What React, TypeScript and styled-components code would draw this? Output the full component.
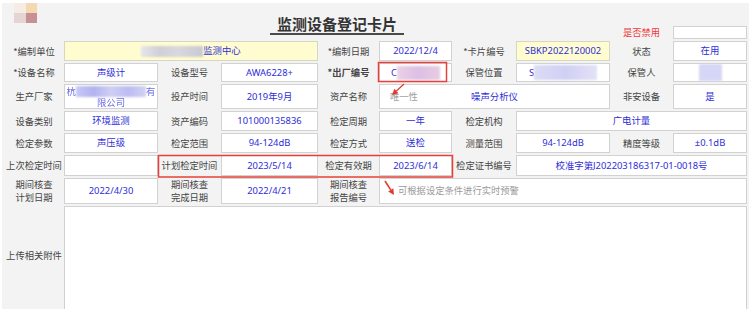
import React from "react";
import styled, { createGlobalStyle } from "styled-components";

const Global = createGlobalStyle`
  html, body { margin: 0; padding: 0; background: #fff; }
  body { font-family: "Noto Sans CJK SC", "Noto Sans", sans-serif; }
  #root { width: 752px; height: 309px; overflow: hidden; }
`;

const Page = styled.div`
  position: relative;
  margin: 3px 3px 0 2px;
  height: 306px;
  background: #f3f3f3;
  overflow: hidden;
`;

const Grid = styled.div`
  display: grid;
  grid-template-columns: 60px 94px 63px 97px 61px 73px 64px 94px 63px 74px;
  grid-template-rows: 36px 20px 19px 25px 20px 20px 21px 26px 99px;
  row-gap: 2px;
  padding-left: 2px;
`;

const Cell = styled.div<{ $c: string; $r: number }>`
  grid-column: ${(p) => p.$c};
  grid-row: ${(p) => p.$r};
  box-sizing: border-box;
  min-width: 0;
`;

const Label = styled(Cell)<{ $bold?: boolean; $red?: boolean }>`
  display: flex;
  align-items: center;
  justify-content: center;
  text-align: center;
  font-size: 9.3px;
  line-height: 13px;
  white-space: pre-line;
  color: ${(p) => (p.$red ? "#f03a3a" : "#454545")};
  font-weight: ${(p) => (p.$bold ? 700 : 400)};
`;

const Value = styled(Cell)<{ $yellow?: boolean; $left?: boolean }>`
  position: relative;
  display: flex;
  align-items: center;
  justify-content: ${(p) => (p.$left ? "flex-start" : "center")};
  padding-left: ${(p) => (p.$left ? "18px" : "0")};
  background: ${(p) => (p.$yellow ? "#fffdd0" : "#fff")};
  border: 1px solid ${(p) => (p.$yellow ? "#d6d6c4" : "#d2d2d2")};
  color: #2e2ed8;
  font-family: "Noto Sans", "Noto Sans CJK SC", sans-serif;
  font-size: 9.4px;
  line-height: 12px;
  white-space: nowrap;
`;

const UploadBox = styled(Value)`
  align-self: start;
  height: 112px;
`;

const SmallBox = styled(Value)`
  align-self: end;
  height: 13px;
`;

const RedLabel = styled(Label)`
  align-self: end;
  height: 14px;
`;

const Stack = styled(Value)`
  flex-direction: column;
  justify-content: center;
  line-height: 11px;
`;

const Line = styled.div`
  display: flex;
  align-items: center;
`;

const Smudge = styled.span<{ $w: number; $h: number; $bg: string }>`
  display: inline-block;
  width: ${(p) => p.$w}px;
  height: ${(p) => p.$h}px;
  background: ${(p) => p.$bg};
  filter: blur(1.2px);
`;

const Blurred = styled.span`
  color: #6b6be6;
  filter: blur(0.6px);
`;

const Placeholder = styled.span`
  position: absolute;
  left: 10px;
  top: 50%;
  transform: translateY(-50%);
  color: #a0a0a0;
  font-size: 9.3px;
`;

const Hint = styled.span`
  color: #9a9a9a;
  font-size: 9.3px;
`;

const LogoCell = styled(Cell)`
  align-self: start;
  justify-self: start;
  margin-left: 10px;
  display: grid;
  grid-template-columns: 12px 11px;
  grid-template-rows: 10px 10px;
  filter: blur(0.6px);
`;

const Tile = styled.span<{ $bg: string }>`
  background: ${(p) => p.$bg};
`;

const TitleCell = styled(Cell)`
  align-self: start;
  padding-left: 206px;
  padding-top: 8px;
`;

const Title = styled.h1`
  display: inline-block;
  margin: 0;
  padding: 0 7px;
  font-size: 15px;
  line-height: 18px;
  font-weight: 700;
  color: #333;
  border-bottom: 2px solid #4a4a4a;
  letter-spacing: 0;
`;

const Overlay = styled.svg`
  position: absolute;
  left: 0;
  top: 0;
  pointer-events: none;
`;

export default function App() {
  return (
    <>
      <Global />
      <Page>
        <Grid>
          <LogoCell $c="1" $r={1}>
            <Tile $bg="#f6ece6" />
            <Tile $bg="#f3d8b0" />
            <Tile $bg="#e6d3d3" />
            <Tile $bg="#c99094" />
          </LogoCell>
          <TitleCell $c="2 / 9" $r={1}>
            <Title>监测设备登记卡片</Title>
          </TitleCell>
          <RedLabel $c="9" $r={1} $red>是否禁用</RedLabel>
          <SmallBox $c="10" $r={1} />

          <Label $c="1" $r={2}>*编制单位</Label>
          <Value $c="2 / 5" $r={2} $yellow>
            <Smudge $w={62} $h={11} $bg="linear-gradient(90deg,#e6e6ea,#cfcfd8 30%,#d8d8de 60%,#c9c9d4)" />
            监测中心
          </Value>
          <Label $c="5" $r={2}>*编制日期</Label>
          <Value $c="6" $r={2}>2022/12/4</Value>
          <Label $c="7" $r={2}>*卡片编号</Label>
          <Value $c="8" $r={2} $yellow>SBKP2022120002</Value>
          <Label $c="9" $r={2}>状态</Label>
          <Value $c="10" $r={2}>在用</Value>

          <Label $c="1" $r={3}>*设备名称</Label>
          <Value $c="2" $r={3}>声级计</Value>
          <Label $c="3" $r={3}>设备型号</Label>
          <Value $c="4" $r={3}>AWA6228+</Value>
          <Label $c="5" $r={3} $bold>*出厂编号</Label>
          <Value $c="6" $r={3}>
            C
            <Smudge $w={43} $h={14} $bg="linear-gradient(90deg,#ead0e6,#dcc0e4 50%,#e8cce0)" />
          </Value>
          <Label $c="7" $r={3}>保管位置</Label>
          <Value $c="8" $r={3}>
            S
            <Smudge $w={63} $h={15} $bg="linear-gradient(90deg,#dcdcf6,#d0d0f4 50%,#e2e2f6)" />
          </Value>
          <Label $c="9" $r={3}>保管人</Label>
          <Value $c="10" $r={3}>
            <Smudge $w={23} $h={17} $bg="#d6d6f6" />
          </Value>

          <Label $c="1" $r={4}>生产厂家</Label>
          <Stack $c="2" $r={4}>
            <Line>
              <Blurred>杭</Blurred>
              <Smudge $w={70} $h={11} $bg="linear-gradient(90deg,#c8c8f6,#b2b2f0 25%,#cfcff4 50%,#bcbcf2 75%,#d2d2f0)" />
              <Blurred>有</Blurred>
            </Line>
            <Line>
              <Blurred>限公司</Blurred>
            </Line>
          </Stack>
          <Label $c="3" $r={4}>投产时间</Label>
          <Value $c="4" $r={4}>2019年9月</Value>
          <Label $c="5" $r={4}>资产名称</Label>
          <Value $c="6 / 9" $r={4}>
            <Placeholder>唯一性</Placeholder>
            噪声分析仪
          </Value>
          <Label $c="9" $r={4}>非安设备</Label>
          <Value $c="10" $r={4}>是</Value>

          <Label $c="1" $r={5}>设备类别</Label>
          <Value $c="2" $r={5}>环境监测</Value>
          <Label $c="3" $r={5}>资产编码</Label>
          <Value $c="4" $r={5}>101000135836</Value>
          <Label $c="5" $r={5}>检定周期</Label>
          <Value $c="6" $r={5}>一年</Value>
          <Label $c="7" $r={5}>检定机构</Label>
          <Value $c="8 / 11" $r={5}>广电计量</Value>

          <Label $c="1" $r={6}>检定参数</Label>
          <Value $c="2" $r={6}>声压级</Value>
          <Label $c="3" $r={6}>检定范围</Label>
          <Value $c="4" $r={6}>94-124dB</Value>
          <Label $c="5" $r={6}>检定方式</Label>
          <Value $c="6" $r={6}>送检</Value>
          <Label $c="7" $r={6}>测量范围</Label>
          <Value $c="8" $r={6}>94-124dB</Value>
          <Label $c="9" $r={6}>精度等级</Label>
          <Value $c="10" $r={6}>±0.1dB</Value>

          <Label $c="1" $r={7}>上次检定时间</Label>
          <Value $c="2" $r={7} />
          <Label $c="3" $r={7}>计划检定时间</Label>
          <Value $c="4" $r={7}>2023/5/14</Value>
          <Label $c="5" $r={7}>检定有效期</Label>
          <Value $c="6" $r={7}>2023/6/14</Value>
          <Label $c="7" $r={7}>检定证书编号</Label>
          <Value $c="8 / 11" $r={7}>校准字第J202203186317-01-0018号</Value>

          <Label $c="1" $r={8}>{"期间核查\n计划日期"}</Label>
          <Value $c="2" $r={8}>2022/4/30</Value>
          <Label $c="3" $r={8}>{"期间核查\n完成日期"}</Label>
          <Value $c="4" $r={8}>2022/4/21</Value>
          <Label $c="5" $r={8}>{"期间核查\n报告编号"}</Label>
          <Value $c="6 / 11" $r={8} $left>
            <Hint>可根据设定条件进行实时预警</Hint>
          </Value>

          <Label $c="1" $r={9}>上传相关附件</Label>
          <UploadBox $c="2 / 11" $r={9} />
        </Grid>
        <Overlay width={747} height={306} viewBox="2 3 747 306">
          <rect x={378.5} y={62.5} width={68} height={19} fill="none" stroke="#e8403a" strokeWidth={1.5} />
          <rect x={158.5} y={155.5} width={294} height={21.5} fill="none" stroke="#e8403a" strokeWidth={1.5} />
          <line x1={404} y1={84} x2={396.4} y2={91} stroke="#e23a2e" strokeWidth={1.2} />
          <polygon points="392,95 398.4,93.2 394.4,88.7" fill="#e23a2e" />
          <line x1={385} y1={181} x2={390.75} y2={189.9} stroke="#e23a2e" strokeWidth={1.6} />
          <polygon points="394,195 388.2,191.5 393.3,188.3" fill="#e23a2e" />
        </Overlay>
      </Page>
    </>
  );
}
